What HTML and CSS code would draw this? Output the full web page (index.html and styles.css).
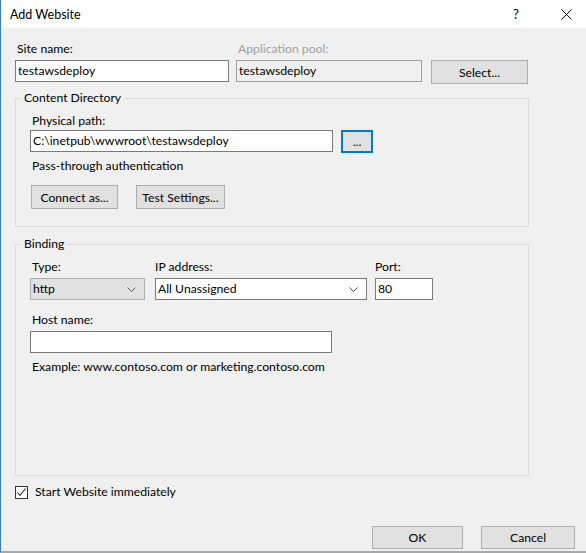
FILE: index.html
```html
<!DOCTYPE html>
<html lang="en">
<head>
    <meta charset="UTF-8">
    <title>Add Website</title>
    <link rel="stylesheet" href="styles.css">
</head>
<body>
<div class="window">
    <!-- Title bar -->
    <div class="titleBar">
        <span class="title">Add Website</span>
        <span class="helpBtn">?</span>
        <span class="closeBtn">
            <svg width="11" height="11" viewBox="0 0 11 11"><path d="M0.5 0.5 L10.5 10.5 M10.5 0.5 L0.5 10.5" stroke="#000" stroke-width="1" fill="none"/></svg>
        </span>
    </div>

    <div class="dialogBody">
        <!-- Site name / app pool -->
        <div class="topRow">
            <div class="field">
                <label>Site name:</label>
                <div class="textBox siteName">testawsdeploy</div>
            </div>
            <div class="field appPool">
                <label class="disabled">Application pool:</label>
                <div class="textBox readOnly">testawsdeploy</div>
            </div>
            <button class="btn selectBtn">Select...</button>
        </div>

        <!-- Content Directory -->
        <fieldset class="group contentDir">
            <legend>Content Directory</legend>
            <label class="physLabel">Physical path:</label>
            <div class="pathRow">
                <div class="textBox pathBox">C:\inetpub\wwwroot\testawsdeploy</div>
                <button class="btn browseBtn">...</button>
            </div>
            <div class="passThrough">Pass-through authentication</div>
            <div class="btnRow">
                <button class="btn connectBtn">Connect as...</button>
                <button class="btn testBtn">Test Settings...</button>
            </div>
        </fieldset>

        <!-- Binding -->
        <fieldset class="group binding">
            <legend>Binding</legend>
            <div class="bindRow">
                <div class="field">
                    <label>Type:</label>
                    <div class="combo typeCombo">http
                        <svg class="chev" width="9" height="5" viewBox="0 0 9 5"><path d="M0.5 0.5 L4.5 4.5 L8.5 0.5" stroke="#555" fill="none"/></svg>
                    </div>
                </div>
                <div class="field ipField">
                    <label>IP address:</label>
                    <div class="combo ipCombo">All Unassigned
                        <svg class="chev" width="9" height="5" viewBox="0 0 9 5"><path d="M0.5 0.5 L4.5 4.5 L8.5 0.5" stroke="#555" fill="none"/></svg>
                    </div>
                </div>
                <div class="field portField">
                    <label>Port:</label>
                    <div class="textBox portBox">80</div>
                </div>
            </div>
            <label class="hostLabel">Host name:</label>
            <div class="textBox hostBox"></div>
            <div class="example">Example: www.contoso.com or marketing.contoso.com</div>
        </fieldset>

        <!-- Start checkbox -->
        <div class="checkRow">
            <span class="checkBox">
                <svg width="11" height="11" viewBox="0 0 11 11"><path d="M1.5 5.5 L4 8.5 L9.5 1.5" stroke="#222" stroke-width="1.1" fill="none"/></svg>
            </span>
            <span>Start Website immediately</span>
        </div>

        <!-- OK / Cancel -->
        <div class="footer">
            <button class="btn okBtn">OK</button>
            <button class="btn cancelBtn">Cancel</button>
        </div>
    </div>
</div>
</body>
</html>
```

FILE: styles.css
```css
body {
    margin: 0;
    font-family: Lato, "Noto Sans", sans-serif;
    font-size: 12.2px;
    color: #000;
    background: #f0f0f0;
}

.window {
    width: 586px;
    height: 553px;
    box-sizing: border-box;
    border-left: 1px solid #2b7fd3;
    border-bottom: 2px solid #a3a8b2;
    background: #f0f0f0;
    overflow: hidden;
}

.titleBar {
    height: 28px;
    background: #fff;
    display: flex;
    align-items: center;
    padding-left: 9px;
}

.title {
    font-size: 12.5px;
    flex: 1;
}

.helpBtn {
    font-size: 13px;
    width: 48px;
    text-align: left;
}

.closeBtn {
    width: 25px;
    display: flex;
    align-items: center;
}

.dialogBody {
    padding: 13px 0 0 14px;
}

label, .passThrough, .example {
    display: block;
    line-height: 16px;
    padding-left: 2px;
}

label.disabled {
    color: #a0a0a0;
}

.textBox, .combo {
    box-sizing: border-box;
    height: 22px;
    line-height: 20px;
    border: 1px solid #7a7a7a;
    background: #fff;
    padding: 0 2px;
    white-space: nowrap;
}

.readOnly {
    background: #f0f0f0;
    border-color: #a0a0a0;
}

.btn {
    box-sizing: border-box;
    font-family: inherit;
    font-size: 12.2px;
    color: #000;
    background: #e1e1e1;
    border: 1px solid #adadad;
    height: 24px;
    padding: 0;
}

/* top row */
.topRow {
    display: flex;
    align-items: flex-end;
}

.field label {
    margin-bottom: 3px;
}

.siteName {
    width: 214px;
}

.appPool {
    margin-left: 7px;
}

.appPool .textBox {
    width: 186px;
}

.selectBtn {
    width: 97px;
    margin-left: 9px;
    margin-bottom: -2px;
}

/* group boxes */
.group {
    margin: 8px 0 0 0;
    width: 514px;
    box-sizing: border-box;
    border: 1px solid #dcdcdc;
    padding: 0 14px 0 14px;
}

.group legend {
    padding: 0 3px;
    margin-left: -9px;
    line-height: 16px;
}

.contentDir {
    height: 137px;
}

.physLabel {
    margin-top: 7px;
    margin-bottom: 1px;
}

.pathRow {
    display: flex;
    align-items: flex-start;
}

.pathBox {
    width: 303px;
}

.browseBtn {
    width: 32px;
    height: 23px;
    margin-left: 8px;
    border: 2px solid #0078d7;
    line-height: 12px;
}

.passThrough {
    margin-top: 5px;
}

.btnRow {
    display: flex;
    margin-top: 11px;
}

.connectBtn {
    width: 87px;
    margin-left: 1px;
}

.testBtn {
    width: 89px;
    margin-left: 18px;
}

/* binding */
.binding {
    margin-top: 9px;
    height: 240px;
}

.bindRow {
    display: flex;
    margin-top: 7px;
}

.combo {
    display: flex;
    align-items: center;
}

.combo .chev {
    margin-left: auto;
    margin-right: 6px;
}

.typeCombo {
    width: 115px;
    background: #e1e1e1;
    border-color: #adadad;
}

.ipField {
    margin-left: 10px;
}

.ipField label, .portField label {
    padding-left: 0;
}

.ipCombo {
    width: 212px;
}

.portField {
    margin-left: 8px;
}

.portBox {
    width: 58px;
}

.hostLabel {
    margin-top: 12px;
    margin-bottom: 3px;
}

.hostBox {
    width: 302px;
}

.example {
    margin-top: 6px;
}

/* checkbox */
.checkRow {
    display: flex;
    align-items: center;
    margin-top: 8px;
    line-height: 16px;
}

.checkBox {
    box-sizing: border-box;
    width: 13px;
    height: 13px;
    border: 1px solid #333;
    background: #fff;
    margin-right: 7px;
    display: flex;
    align-items: center;
    justify-content: center;
}

.checkBox svg {
    display: block;
}

/* footer */
.footer {
    display: flex;
    justify-content: flex-end;
    margin-top: 26px;
    padding-right: 11px;
}

.okBtn {
    width: 91px;
    height: 23px;
}

.cancelBtn {
    width: 94px;
    height: 23px;
    margin-left: 18px;
}
```
